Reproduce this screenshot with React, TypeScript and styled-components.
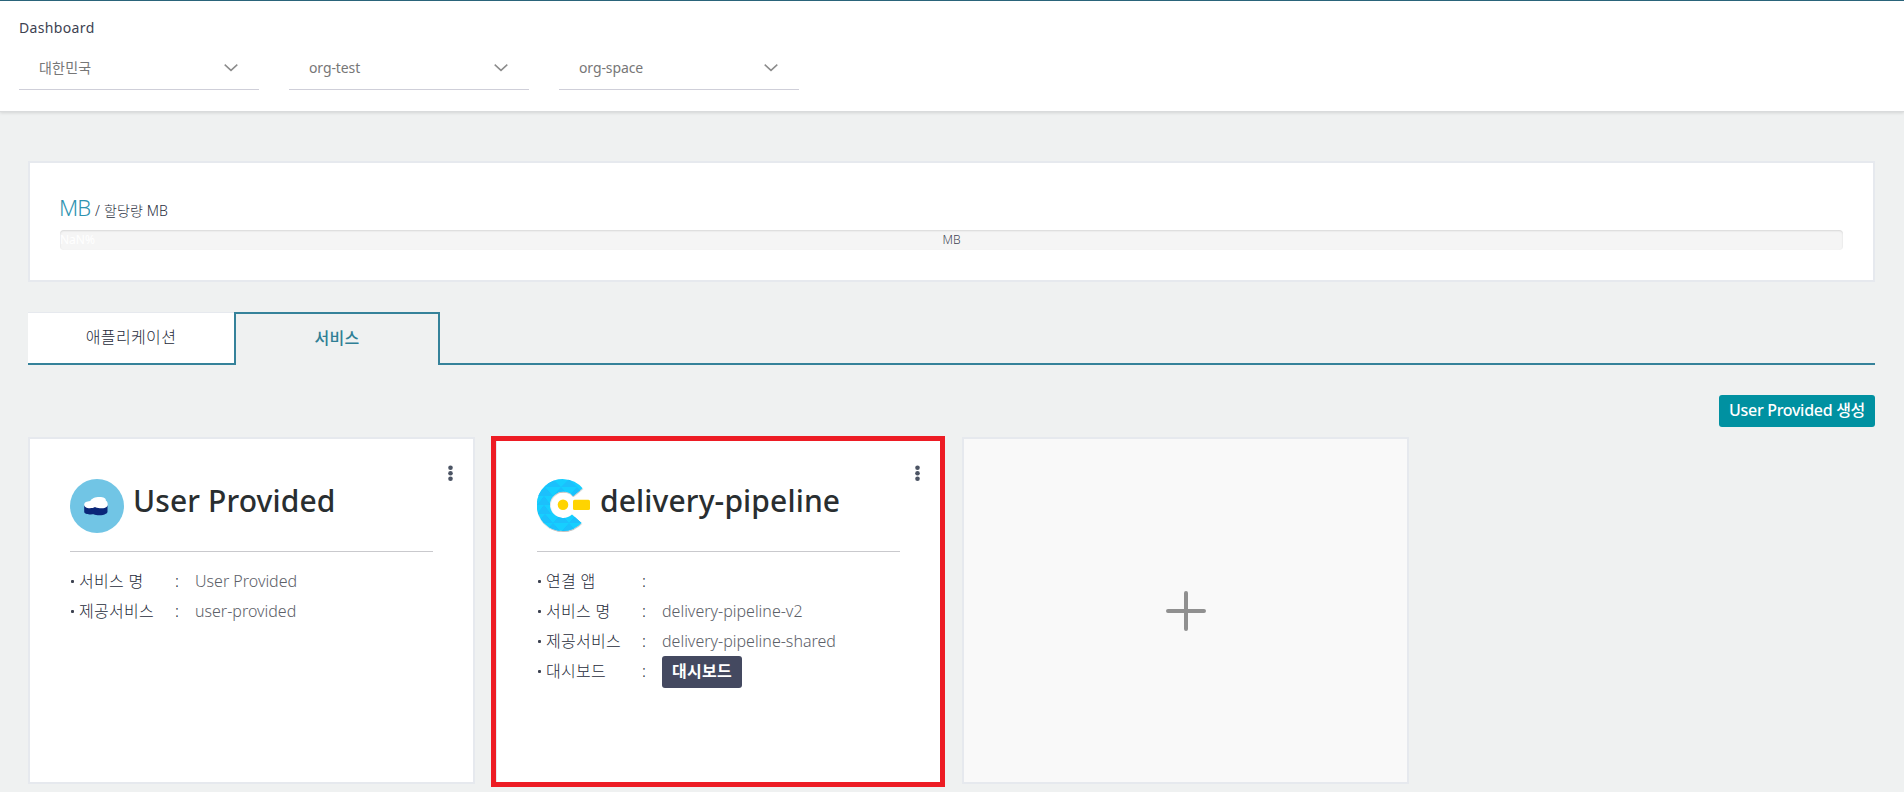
import React from 'react';
import styled, { createGlobalStyle } from 'styled-components';

const GlobalStyle = createGlobalStyle`
  *, *::before, *::after { box-sizing: border-box; }
  body {
    margin: 0;
    background: #eff1f1;
    color: #3d4251;
    font-family: "Noto Sans", "Noto Sans CJK KR", sans-serif;
  }
  button { font-family: inherit; border: 0; padding: 0; cursor: pointer; }
  ul { margin: 0; padding: 0; list-style: none; }
  h1, h2, p { margin: 0; }
`;

const Page = styled.div`
  height: 792px;
  overflow: hidden;
`;

const Header = styled.header`
  height: 112px;
  padding: 17px 19px 0;
  background: #fff;
  border-top: 1px solid #2a647a;
  border-bottom: 1px solid #d9dbdc;
  box-shadow: 0 1px 3px rgba(0, 0, 0, 0.12);
`;

const PageTitle = styled.h1`
  height: 20px;
  font-size: 14px;
  font-weight: 400;
  line-height: 20px;
  letter-spacing: 0.35px;
`;

const Filters = styled.div`
  display: flex;
  gap: 30px;
  margin-top: 12px;
`;

const Select = styled.button`
  display: flex;
  align-items: center;
  justify-content: space-between;
  width: 240px;
  height: 40px;
  padding: 0 21px 3px 20px;
  background: transparent;
  border-bottom: 1px solid #cfcfd9;
  color: #777;
  font-size: 14px;
  line-height: 20px;
`;

const FilterName = styled.span`
  letter-spacing: -0.1px;

  &:lang(ko) {
    letter-spacing: 0.2px;
  }
`;

const Main = styled.main`
  padding: 49px 29px 0 28px;
`;

const Quota = styled.section`
  height: 121px;
  padding: 27px 30px 0;
  background: #fff;
  border: 2px solid #e6e9ee;
`;

const QuotaLabel = styled.p`
  height: 40px;
  color: #2b303f;
  font-size: 14px;
  font-weight: 300;
  line-height: 34px;
  letter-spacing: 0.15px;
`;

const QuotaUsed = styled.span`
  color: #2e93b0;
  font-size: 22px;
  letter-spacing: -0.9px;
  margin: 0 1px 0 -1px;
`;

const Progress = styled.div`
  display: grid;
  grid-template-columns: 1fr auto 1fr;
  align-items: center;
  height: 20px;
  background: #f5f5f5;
  border-radius: 4px;
  box-shadow: inset 0 1px 2px rgba(0, 0, 0, 0.12);
  font-size: 12px;
  font-weight: 300;
  line-height: 20px;
`;

const Percent = styled.span`
  color: #fff;
  font-weight: 400;
`;

const Tabs = styled.nav`
  display: flex;
  height: 53px;
  margin-top: 30px;
`;

const Tab = styled.button<{ $active?: boolean }>`
  width: 206px;
  height: 53px;
  font-size: 16px;
  line-height: 24px;
  letter-spacing: 0.35px;
  padding-bottom: ${(p) => (p.$active ? 4 : 2)}px;
  background: ${(p) => (p.$active ? 'transparent' : '#fff')};
  color: ${(p) => (p.$active ? '#2f7f95' : '#262b3a')};
  font-weight: ${(p) => (p.$active ? 500 : 300)};
  border: solid ${(p) => (p.$active ? '#35829a' : '#e6e9ee')};
  border-width: ${(p) => (p.$active ? '2px 2px 0' : '1px 0 0')};
  ${(p) => !p.$active && 'border-bottom: 2px solid #35829a;'}
`;

const TabRule = styled.div`
  flex: 1;
  border-bottom: 2px solid #35829a;
`;

const Toolbar = styled.div`
  display: flex;
  justify-content: flex-end;
  margin-top: 30px;
`;

const SolidButton = styled.button<{ $tone: 'teal' | 'slate' }>`
  width: ${(p) => (p.$tone === 'teal' ? 156 : 80)}px;
  height: 32px;
  padding-bottom: 2px;
  border-radius: 3px;
  background: ${(p) => (p.$tone === 'teal' ? '#0091a1' : '#444960')};
  color: #fff;
  font-size: 16px;
  font-weight: ${(p) => (p.$tone === 'teal' ? 500 : 700)};
  letter-spacing: ${(p) => (p.$tone === 'teal' ? -0.3 : 0.3)}px;
  line-height: 24px;
  white-space: nowrap;
`;

const Cards = styled.div`
  display: flex;
  gap: 20px;
  margin-top: 10px;
`;

const Card = styled.article<{ $highlighted?: boolean }>`
  position: relative;
  width: 447px;
  height: 347px;
  padding: 40px;
  background: #fff;
  border: 2px solid #e6e9ee;
  ${(p) =>
    p.$highlighted &&
    `&::after {
      content: '';
      position: absolute;
      inset: -3px -5px -5px -6px;
      border: 5px solid #ed1c24;
    }`}
`;

const AddCard = styled.button`
  display: flex;
  align-items: center;
  justify-content: center;
  width: 447px;
  height: 347px;
  padding-left: 1px;
  background: #f9f9f9;
  border: 2px solid #e6e9ee;
`;

const MenuButton = styled.button`
  position: absolute;
  top: 26px;
  right: 20px;
  display: flex;
  background: transparent;
`;

const CardHead = styled.header`
  display: flex;
  gap: 9px;
  width: 363px;
  height: 73px;
  border-bottom: 1px solid #c9c9cd;
`;

const CardTitle = styled.h2`
  color: #292e30;
  font-size: 30px;
  font-weight: 500;
  line-height: 44px;
  letter-spacing: 0.13px;
  white-space: nowrap;
`;

const Details = styled.ul`
  margin-top: 14px;
`;

const Detail = styled.li`
  display: flex;
  height: 30px;
  color: #262b3a;
  font-size: 16px;
  font-weight: 300;
  line-height: 30px;
  white-space: nowrap;
`;

const Bullet = styled.span`
  width: 3px;
  height: 3px;
  margin: 14px 5px 0 1px;
  border-radius: 1px;
  background: #3d4251;
`;

const Label = styled.span`
  width: 96px;
  letter-spacing: 0.3px;
`;

const Colon = styled.span`
  width: 20px;
`;

const Value = styled.span`
  color: #5c6068;
`;

const ChevronIcon = () => (
  <svg width="14" height="8" viewBox="0 0 14 8" fill="none" stroke="#8c8c8c" strokeWidth="1.5">
    <path d="M0.7 0.6 7 6.4 13.3 0.6" />
  </svg>
);

const DotsIcon = () => (
  <svg width="5" height="17" viewBox="0 0 5 17" fill="#4c5464">
    <circle cx="2.5" cy="2.7" r="2.3" />
    <circle cx="2.5" cy="8.2" r="2.3" />
    <circle cx="2.5" cy="13.7" r="2.3" />
  </svg>
);

const PlusIcon = () => (
  <svg width="40" height="40" viewBox="0 0 40 40" stroke="#909090" strokeWidth="4" strokeLinecap="round">
    <path d="M20 2v36M2 20h36" />
  </svg>
);

const CloudIcon = () => (
  <svg width="54" height="54" viewBox="0 0 54 54">
    <circle cx="27" cy="27" r="27" fill="#71c5e5" />
    <path
      fill="#0a2678"
      d="M14.2 26.5v6.2c0 2.4 5 3.1 9.4 2.6 3 1.4 9.5 1.4 12.2-.5 1-.6 1.7-1.2 1.7-2.1v-6.2z"
    />
    <path
      fill="#fff"
      d="M14.2 25.5c0-2 2.4-3 6-3.4 1.2-2.8 5-4.2 9.3-4.2 4.2 0 6.7 1.4 6.3 3.6 1.4.8 1.9 2.1 1.9 3.9 0 2.7-3 3.900-7.800 3.900-2.400 0-3.800-.6-4.900-1.200-1.300.8-3 1.200-5.200 1.200-3.300 0-5.600-1.200-5.600-3.800z"
    />
  </svg>
);

const PipelineIcon = () => (
  <svg width="54" height="54" viewBox="0 0 54 54">
    <defs>
      <clipPath id="ring">
        <path d="M45.5 9.3A26 26 0 1 0 44.5 44L35 35.5A13.2 13.2 0 1 1 36 17z" />
      </clipPath>
      <filter id="ringShadow" x="-10%" y="-10%" width="120%" height="120%">
        <feDropShadow dx="0.3" dy="0.8" stdDeviation="0.7" floodOpacity="0.3" />
      </filter>
    </defs>
    <g filter="url(#ringShadow)">
      <g clipPath="url(#ring)">
        <rect width="54" height="54" fill="#17cfff" />
        <path
          fill="#1ac0fc"
          d="M8 8 16 0l8 8zM24 8l8-8 8 8zM0 17l8-9 8 9zM16 17l8-9 8 9zM32 17l8-9 8 9zM0 26l7-9 7 9zM0 35l7-9 7 9zM0 44l8-9 8 9zM8 53l8-9 8 9zM16 44l8-9 8 9zM24 53l8-9 8 9zM32 44l8-9 8 9z"
        />
      </g>
    </g>
    <circle cx="26" cy="25.8" r="5.3" fill="#ffd400" />
    <rect x="36" y="20.8" width="17" height="10.2" rx="1.5" fill="#ffd400" />
  </svg>
);

const filters = [
  { name: '대한민국', lang: 'ko' },
  { name: 'org-test', lang: 'en' },
  { name: 'org-space', lang: 'en' },
];

type DetailItem = { label: string; value?: string; action?: string };
type Service = { name: string; icon: React.ReactNode; highlighted?: boolean; details: DetailItem[] };

const services: Service[] = [
  {
    name: 'User Provided',
    icon: <CloudIcon />,
    details: [
      { label: '서비스 명', value: 'User Provided' },
      { label: '제공서비스', value: 'user-provided' },
    ],
  },
  {
    name: 'delivery-pipeline',
    icon: <PipelineIcon />,
    highlighted: true,
    details: [
      { label: '연결 앱' },
      { label: '서비스 명', value: 'delivery-pipeline-v2' },
      { label: '제공서비스', value: 'delivery-pipeline-shared' },
      { label: '대시보드', action: '대시보드' },
    ],
  },
];

const ServiceCard = ({ name, icon, highlighted, details }: Service) => (
  <Card $highlighted={highlighted}>
    <MenuButton aria-label="menu">
      <DotsIcon />
    </MenuButton>
    <CardHead>
      {icon}
      <CardTitle>{name}</CardTitle>
    </CardHead>
    <Details>
      {details.map((d) => (
        <Detail key={d.label}>
          <Bullet />
          <Label>{d.label}</Label>
          <Colon>:</Colon>
          {d.action ? <SolidButton $tone="slate">{d.action}</SolidButton> : <Value>{d.value}</Value>}
        </Detail>
      ))}
    </Details>
  </Card>
);

export default function App() {
  return (
    <Page>
      <GlobalStyle />
      <Header>
        <PageTitle>Dashboard</PageTitle>
        <Filters>
          {filters.map((f) => (
            <Select key={f.name}>
              <FilterName lang={f.lang}>{f.name}</FilterName>
              <ChevronIcon />
            </Select>
          ))}
        </Filters>
      </Header>
      <Main>
        <Quota>
          <QuotaLabel>
            <QuotaUsed>MB</QuotaUsed> / 할당량 MB
          </QuotaLabel>
          <Progress>
            <Percent>NaN%</Percent>
            <span>MB</span>
          </Progress>
        </Quota>
        <Tabs>
          <Tab>애플리케이션</Tab>
          <Tab $active>서비스</Tab>
          <TabRule />
        </Tabs>
        <Toolbar>
          <SolidButton $tone="teal">User Provided 생성</SolidButton>
        </Toolbar>
        <Cards>
          {services.map((s) => (
            <ServiceCard key={s.name} {...s} />
          ))}
          <AddCard aria-label="add">
            <PlusIcon />
          </AddCard>
        </Cards>
      </Main>
    </Page>
  );
}
